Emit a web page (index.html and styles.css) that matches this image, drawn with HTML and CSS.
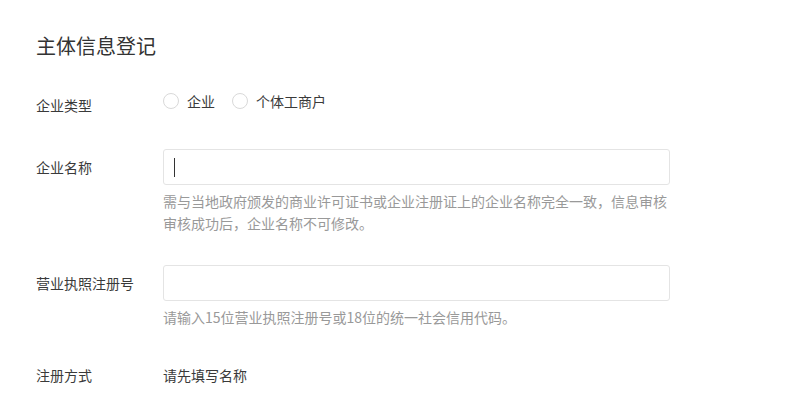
FILE: index.html
```html
<!DOCTYPE html>
<html lang="zh-CN">
<head>
  <meta charset="UTF-8">
  <meta name="viewport" content="width=device-width, initial-scale=1.0">
  <title>主体信息登记</title>
  <link rel="stylesheet" href="styles.css">
</head>
<body>
  <div class="page">
    <h1>主体信息登记</h1>

    <div class="row row-type">
      <div class="label">企业类型</div>
      <div class="radios">
        <label class="radio"><span class="dot"></span>企业</label>
        <label class="radio"><span class="dot"></span>个体工商户</label>
      </div>
    </div>

    <div class="row">
      <div class="label label-input">企业名称</div>
      <div class="field">
        <div class="input"><span class="caret"></span></div>
        <p class="help">需与当地政府颁发的商业许可证书或企业注册证上的企业名称完全一致，信息审核审核成功后，企业名称不可修改。</p>
      </div>
    </div>

    <div class="row row-license">
      <div class="label label-input">营业执照注册号</div>
      <div class="field">
        <div class="input"></div>
        <p class="help">请输入15位营业执照注册号或18位的统一社会信用代码。</p>
      </div>
    </div>

    <div class="row row-way">
      <div class="label">注册方式</div>
      <div class="value">请先填写名称</div>
    </div>
  </div>
</body>
</html>
```

FILE: styles.css
```css
body {
  margin: 0;
  background: #ffffff;
  font-family: "Noto Sans CJK SC", "Noto Sans", sans-serif;
  color: #333333;
}
.page {
  padding: 32px 36px;
}
h1 {
  margin: 0;
  font-size: 20px;
  line-height: 28px;
  font-weight: normal;
  color: #333333;
}
.row {
  display: grid;
  grid-template-columns: 127px 507px;
  align-items: start;
}
.label {
  font-size: 14px;
  line-height: 20px;
  color: #3a3a3a;
}
.label-input {
  line-height: 36px;
}
.row-type {
  margin-top: 31px;
}
.row-type .label {
  padding-top: 4px;
}
.radios {
  display: flex;
  align-items: center;
  gap: 17px;
  font-size: 14px;
  line-height: 20px;
}
.radio {
  display: flex;
  align-items: center;
  gap: 8px;
  color: #3a3a3a;
}
.dot {
  width: 16px;
  height: 16px;
  box-sizing: border-box;
  border: 1px solid #d9d9d9;
  border-radius: 50%;
  background: #ffffff;
}
.row-type + .row {
  margin-top: 34px;
}
.input {
  height: 36px;
  box-sizing: border-box;
  border: 1px solid #e4e4e4;
  border-radius: 3px;
  background: #ffffff;
  padding: 8px 10px;
}
.caret {
  display: block;
  width: 1px;
  height: 19px;
  background: #333333;
}
.help {
  margin: 5px 0 0;
  font-size: 14px;
  line-height: 22px;
  color: #999999;
}
.row-license {
  margin-top: 31px;
}
.row-way {
  margin-top: 37px;
}
.value {
  font-size: 14px;
  line-height: 20px;
  color: #3a3a3a;
}
```
